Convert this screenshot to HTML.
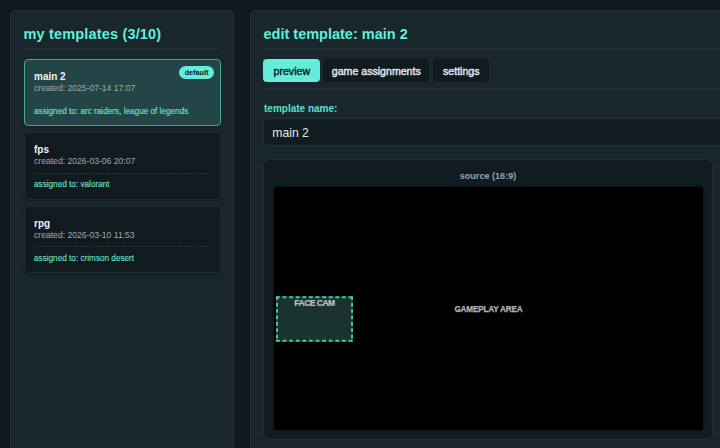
<!DOCTYPE html>
<html><head><meta charset="utf-8">
<style>
*{box-sizing:border-box;margin:0;padding:0}
html,body{width:720px;height:448px;overflow:hidden;background:#0f1a1f;font-family:"Liberation Sans",sans-serif}
.abs{position:absolute}
.panel{position:absolute;top:10px;background:#19262b;border:1px solid #253338;border-radius:6px;height:460px}
.title{position:absolute;left:12.5px;top:14.8px;font-size:14.5px;font-weight:bold;color:#60efda;line-height:17px;white-space:nowrap}
.divider{position:absolute;height:2px;background:#1f2c31}
.card{position:absolute;left:13px;width:197px;border:1px solid #1f2c32;background:#101a1f;border-radius:4px;box-shadow:0 1px 2px rgba(0,0,0,.35)}
.card.active{background:#244547;border-color:#44a899}
.cname{position:absolute;left:9px;font-size:10px;font-weight:bold;color:#eef2f4;line-height:12px;white-space:nowrap}
.cdate{position:absolute;left:9px;font-size:8.6px;color:#a0a8ac;line-height:10px;white-space:nowrap}
.cassign{position:absolute;left:9px;font-size:8.2px;color:#66e6d0;-webkit-text-stroke:0.1px currentColor;line-height:10px;white-space:nowrap}
.dots{position:absolute;left:9px;width:177px;height:1px;display:block}
.badge{position:absolute;left:154px;top:6px;width:35px;height:13px;border-radius:7px;background:#62eedb;color:#10202a;font-size:7.2px;font-weight:bold;line-height:13px;text-align:center}
.tab{position:absolute;top:48px;height:23px;border-radius:4px;background:#101a1f;color:#e6eaee;font-size:10.6px;-webkit-text-stroke:0.4px currentColor;line-height:24px;text-align:center;white-space:nowrap}
.tab.on{background:#62eedb;color:#10202a}
</style></head><body>
<div class="panel" style="left:10px;width:224px">
  <div class="title" style="letter-spacing:0.17px">my templates (3/10)</div>
  <div class="divider" style="left:13px;width:197px;top:37px"></div>
  <div class="card active" style="top:48px;height:67px">
    <div class="cname" style="top:10.5px">main 2</div>
    <div class="cdate" style="top:22.5px">created: 2025-07-14 17:07</div>
    <svg class="dots" style="top:40px" width="177" height="1"><line x1="0.3" y1="0.5" x2="177" y2="0.5" stroke="#1f3a3c" stroke-width="1" stroke-dasharray="1.6 1.65"/></svg>
    <div class="cassign" style="top:47px">assigned to: arc raiders, league of legends</div>
    <div class="badge">default</div>
  </div>
  <div class="card" style="top:121px;height:68px">
    <div class="cname" style="top:10.5px">fps</div>
    <div class="cdate" style="top:22.5px">created: 2026-03-06 20:07</div>
    <svg class="dots" style="top:40px" width="177" height="1"><line x1="0.3" y1="0.5" x2="177" y2="0.5" stroke="#33434a" stroke-width="1" stroke-dasharray="1.6 1.65"/></svg>
    <div class="cassign" style="top:47px">assigned to: valorant</div>
  </div>
  <div class="card" style="top:195px;height:67px">
    <div class="cname" style="top:10.5px">rpg</div>
    <div class="cdate" style="top:22.5px">created: 2026-03-10 11:53</div>
    <svg class="dots" style="top:39px" width="177" height="1"><line x1="0.3" y1="0.5" x2="177" y2="0.5" stroke="#33434a" stroke-width="1" stroke-dasharray="1.6 1.65"/></svg>
    <div class="cassign" style="top:47px">assigned to: crimson desert</div>
  </div>
</div>
<div class="panel" style="left:250px;width:520px">
  <div class="title">edit template: main 2</div>
  <div class="divider" style="left:13px;width:600px;top:37px"></div>
  <div class="tab on" style="left:12.3px;width:57px">preview</div>
  <div class="tab" style="left:72.3px;width:106px">game assignments</div>
  <div class="tab" style="left:182.3px;width:56px">settings</div>
  <div class="divider" style="left:13px;width:600px;top:77px"></div>
  <div class="abs" style="left:13px;top:91.7px;font-size:10px;font-weight:bold;color:#5fe0c9;line-height:11px;white-space:nowrap">template name:</div>
  <div class="abs" style="left:12px;top:107px;width:600px;height:28px;background:#101c20;border:1px solid #223035;border-radius:5px">
    <div class="abs" style="left:8.3px;top:6.8px;font-size:12.2px;color:#e6e9ec;line-height:14px">main 2</div>
  </div>
  <div class="abs" style="left:12px;top:148px;width:450px;height:281px;background:#101c20;border:1px solid #223035;border-radius:6px">
    <div class="abs" style="left:0;right:0;top:11.2px;text-align:center;font-size:9.1px;font-weight:bold;color:#93a6b0;line-height:11px">source (16:9)</div>
    <div class="abs" style="left:10px;top:27px;width:429px;height:243px;background:#000;border-radius:3px;box-shadow:0 0 3px rgba(0,0,0,.45)">
      <div class="abs" style="left:0;right:0;top:117.5px;text-align:center;font-size:8.2px;letter-spacing:-0.2px;font-weight:bold;-webkit-text-stroke:0.25px currentColor;color:#b4b4b4;line-height:9px">GAMEPLAY AREA</div>
      <div class="abs" style="left:2px;top:109px;width:77px;height:45.5px;background:#19332f">
        <svg class="abs" style="left:0;top:0" width="77" height="46" viewBox="0 0 77 45.5">
          <g stroke="#47c2ad" stroke-width="2" fill="none">
            <line x1="0" y1="1" x2="77" y2="1" stroke-dasharray="3.8 2.8"/>
            <line x1="0" y1="44.5" x2="77" y2="44.5" stroke-dasharray="3.8 2.8"/>
            <line x1="1" y1="0" x2="1" y2="45.5" stroke-dasharray="3.8 2.6"/>
            <line x1="76" y1="0" x2="76" y2="45.5" stroke-dasharray="3.8 2.6"/>
          </g>
        </svg>
        <div class="abs" style="left:0;right:0;top:1.5px;text-align:center;font-size:8.6px;letter-spacing:-0.55px;font-weight:bold;-webkit-text-stroke:0.2px currentColor;color:#c0c0c0;line-height:10px">FACE CAM</div>
      </div>
    </div>
  </div>
</div>
</body></html>
